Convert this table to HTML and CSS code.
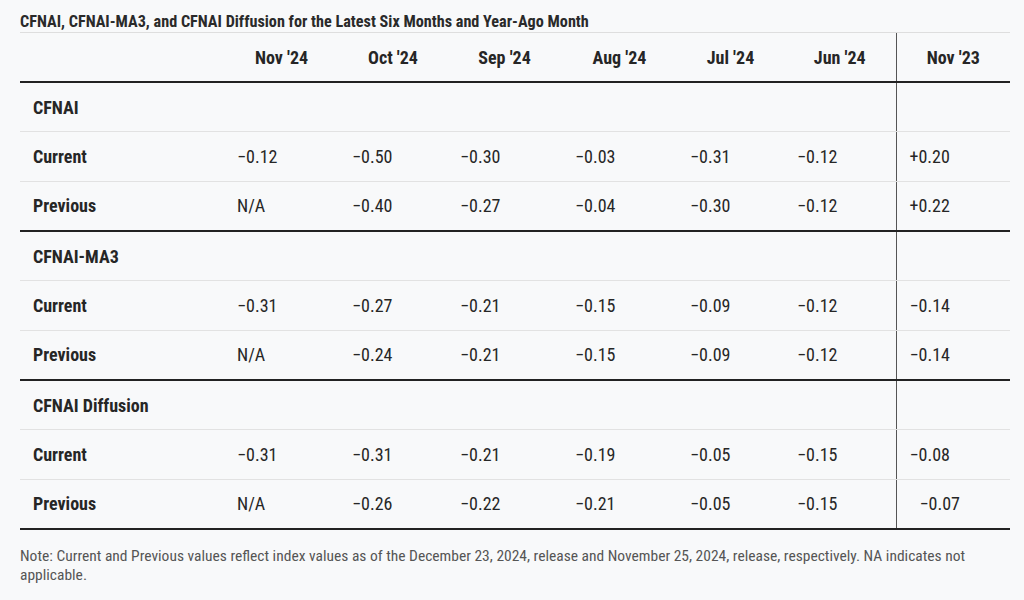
FILE: index.html
```html
<!DOCTYPE html>
<html lang="en">
<head>
<meta charset="utf-8">
<title>CFNAI table</title>
<link rel="stylesheet" href="styles.css">
</head>
<body>
<div class="page">
  <div class="title">CFNAI, CFNAI-MA3, and CFNAI Diffusion for the Latest Six Months and Year-Ago Month</div>
  <table class="data">
    <colgroup>
      <col class="c0"><col class="c1"><col class="c2"><col class="c3"><col class="c4"><col class="c5"><col class="c6"><col class="c7">
    </colgroup>
    <thead>
      <tr>
        <th></th><th>Nov '24</th><th>Oct '24</th><th>Sep '24</th><th>Aug '24</th><th>Jul '24</th><th>Jun '24</th><th class="ya">Nov '23</th>
      </tr>
    </thead>
    <tbody class="grp">
      <tr class="sec"><td class="lbl">CFNAI</td><td></td><td></td><td></td><td></td><td></td><td></td><td class="ya"></td></tr>
      <tr><td class="lbl">Current</td><td>−0.12</td><td>−0.50</td><td>−0.30</td><td>−0.03</td><td>−0.31</td><td>−0.12</td><td class="ya">+0.20</td></tr>
      <tr class="last"><td class="lbl">Previous</td><td>N/A</td><td>−0.40</td><td>−0.27</td><td>−0.04</td><td>−0.30</td><td>−0.12</td><td class="ya">+0.22</td></tr>
    </tbody>
    <tbody class="grp">
      <tr class="sec"><td class="lbl">CFNAI-MA3</td><td></td><td></td><td></td><td></td><td></td><td></td><td class="ya"></td></tr>
      <tr><td class="lbl">Current</td><td>−0.31</td><td>−0.27</td><td>−0.21</td><td>−0.15</td><td>−0.09</td><td>−0.12</td><td class="ya">−0.14</td></tr>
      <tr class="last"><td class="lbl">Previous</td><td>N/A</td><td>−0.24</td><td>−0.21</td><td>−0.15</td><td>−0.09</td><td>−0.12</td><td class="ya">−0.14</td></tr>
    </tbody>
    <tbody class="grp">
      <tr class="sec"><td class="lbl">CFNAI Diffusion</td><td></td><td></td><td></td><td></td><td></td><td></td><td class="ya"></td></tr>
      <tr><td class="lbl">Current</td><td>−0.31</td><td>−0.31</td><td>−0.21</td><td>−0.19</td><td>−0.05</td><td>−0.15</td><td class="ya">−0.08</td></tr>
      <tr class="last"><td class="lbl">Previous</td><td>N/A</td><td>−0.26</td><td>−0.22</td><td>−0.21</td><td>−0.05</td><td>−0.15</td><td class="ya shift">−0.07</td></tr>
    </tbody>
  </table>
  <p class="note">Note: Current and Previous values reflect index values as of the December 23, 2024, release and November 25, 2024, release, respectively. NA indicates not applicable.</p>
</div>
</body>
</html>
```

FILE: styles.css
```css
html, body {
  margin: 0;
  padding: 0;
  background: #f8f9fa;
}

body {
  font-family: Roboto, "Liberation Sans", sans-serif;
  font-stretch: 85%;
  color: #262626;
}

.page {
  padding: 0 14px 0 20px;
}

.title {
  font-size: 16.2px;
  font-stretch: 85%;
  font-weight: 700;
  color: #2a2a2a;
  height: 33px;
  box-sizing: border-box;
  padding-top: 13px;
  line-height: 18px;
  border-bottom: 1px solid #dedede;
}

.data {
  border-collapse: collapse;
  width: 990px;
  table-layout: fixed;
}

.c0 { width: 204px; }
.c1 { width: 115px; }
.c2 { width: 108px; }
.c3 { width: 115px; }
.c4 { width: 115px; }
.c5 { width: 107px; }
.c6 { width: 112px; }
.c7 { width: 114px; }

.data th {
  height: 48px;
  padding: 0;
  font-size: 18px;
  font-weight: 700;
  text-align: center;
  vertical-align: middle;
  border-bottom: 2px solid #222;
}

.data td {
  height: 48.33px;
  padding: 0 0 0 13px;
  font-size: 18px;
  font-weight: 400;
  text-align: left;
  vertical-align: middle;
  border-bottom: 1px solid #e2e2e2;
}

.data td.lbl {
  font-weight: 700;
}

.data .ya {
  border-left: 1px solid #555;
}

.data td.ya {
  padding-left: 13px;
}

.data td.shift {
  padding-left: 23px;
}

.data tr.last td {
  border-bottom: 2px solid #222;
}

.note {
  margin: 17px 0 0 0;
  font-size: 15.5px;
  font-stretch: 85%;
  line-height: 19px;
  color: #555;
}
```
